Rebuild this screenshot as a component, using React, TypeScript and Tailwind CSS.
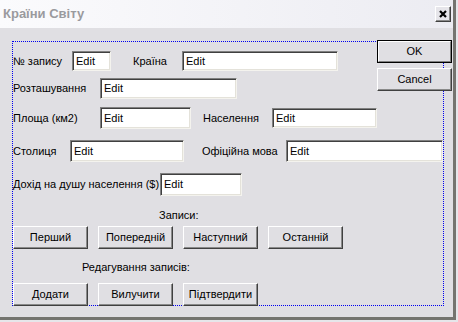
import React from "react";

const font = { fontFamily: '"Liberation Sans", Arial, sans-serif' };

function Edit({ w, h = 21 }: { w: string; h?: number }) {
  const hc = h === 20 ? "h-[20px]" : h === 22 ? "h-[22px]" : h === 23 ? "h-[23px]" : "h-[21px]";
  return (
    <div
      className={`${w} ${hc} shrink-0 flex items-center bg-white border border-t-[#808080] border-l-[#808080] border-r-[#f4f3ee] border-b-[#f4f3ee] shadow-[inset_1px_1px_0_#404040,inset_-1px_-1px_0_#e4e2da] pl-[3px] text-[11px] text-black leading-none`}
    >
      Edit
    </div>
  );
}

function Btn({ children, def = false }: { children: React.ReactNode; def?: boolean }) {
  if (def) {
    return (
      <div className="w-[75px] h-[23px] border border-black bg-[#e0dfe3]">
        <div className="h-full flex items-center justify-center border border-t-white border-l-white border-r-[#808080] border-b-[#808080] text-[11px] text-black">
          {children}
        </div>
      </div>
    );
  }
  return (
    <div className="w-[75px] h-[23px] shrink-0 flex items-center justify-center bg-[#e0dfe3] border border-t-white border-l-white border-r-[#404040] border-b-[#404040] shadow-[inset_-1px_-1px_0_#8a8a8a] text-[11px] text-black">
      {children}
    </div>
  );
}

function Label({ w, children, ml = "" }: { w: string; children: React.ReactNode; ml?: string }) {
  return <span className={`${w} ${ml} shrink-0 whitespace-nowrap text-[11px] text-black`}>{children}</span>;
}

export default function App() {
  return (
    <div className="w-[458px] h-[322px] bg-[#e6e6ea] overflow-hidden" style={font}>
      <div className="w-[456px] h-[320px] flex flex-col bg-[#e0dfe3] border-r-[3px] border-b-[3px] border-[#74746f]">
        {/* title bar */}
        <div className="h-[28px] shrink-0 flex items-center justify-between pl-[3px] pr-[2px] bg-gradient-to-r from-[#fbfbfd] to-[#ececf2]">
          <span className="text-[13px] font-bold text-[#9a9a9e]">Країни Світу</span>
          <div className="w-[16px] h-[16px] flex items-center justify-center bg-[#e6e5ea] border border-t-white border-l-white border-r-[#404040] border-b-[#404040] shadow-[inset_-1px_-1px_0_#8a8a8a]">
            <svg width="8" height="8" viewBox="0 0 8 8">
              <path d="M1 1L7 7M7 1L1 7" stroke="#000" strokeWidth="2.2" />
            </svg>
          </div>
        </div>

        {/* dialog body */}
        <div className="ml-[12px] mt-[13px] w-[432px] h-[265px] flex flex-col border border-dotted border-[#0000f0]">
          <div className="flex items-start justify-between">
            <div className="flex flex-col">
              <div className="mt-[9px] h-[20px] flex items-center">
                <Label w="w-[59px]">№ запису</Label>
                <Edit w="w-[39px]" h={20} />
                <Label w="w-[49px]" ml="ml-[22px]">Країна</Label>
                <Edit w="w-[156px]" h={20} />
              </div>
              <div className="mt-[7px] h-[21px] flex items-center">
                <Label w="w-[87px]">Розташування</Label>
                <Edit w="w-[137px]" />
              </div>
              <div className="mt-[8px] h-[22px] flex items-center">
                <Label w="w-[87px]">Площа (км2)</Label>
                <Edit w="w-[91px]" h={22} />
                <Label w="w-[69px]" ml="ml-[12px]">Населення</Label>
                <Edit w="w-[105px]" h={20} />
              </div>
            </div>
            <div className="-mt-[2px] flex flex-col gap-[5px]">
              <Btn def>OK</Btn>
              <Btn>Cancel</Btn>
            </div>
          </div>

          <div className="mt-[11px] h-[22px] flex items-center">
            <Label w="w-[57px]">Столиця</Label>
            <Edit w="w-[114px]" h={22} />
            <Label w="w-[84px]" ml="ml-[18px]">Офіційна мова</Label>
            <Edit w="w-[157px]" h={22} />
          </div>

          <div className="mt-[11px] h-[23px] flex items-center">
            <Label w="w-[147px]">Дохід на душу населення ($)</Label>
            <Edit w="w-[82px]" h={23} />
          </div>

          <div className="mt-[13px] h-[13px] leading-[13px] pl-[146px] text-[11px] text-black">Записи:</div>

          <div className="mt-[4px] flex gap-[10px]">
            <Btn>Перший</Btn>
            <Btn>Попередній</Btn>
            <Btn>Наступний</Btn>
            <Btn>Останній</Btn>
          </div>

          <div className="mt-[12px] h-[13px] leading-[13px] pl-[69px] text-[11px] text-black">Редагування записів:</div>

          <div className="mt-[9px] flex gap-[10px]">
            <Btn>Додати</Btn>
            <Btn>Вилучити</Btn>
            <Btn>Підтвердити</Btn>
          </div>
        </div>
      </div>
    </div>
  );
}
